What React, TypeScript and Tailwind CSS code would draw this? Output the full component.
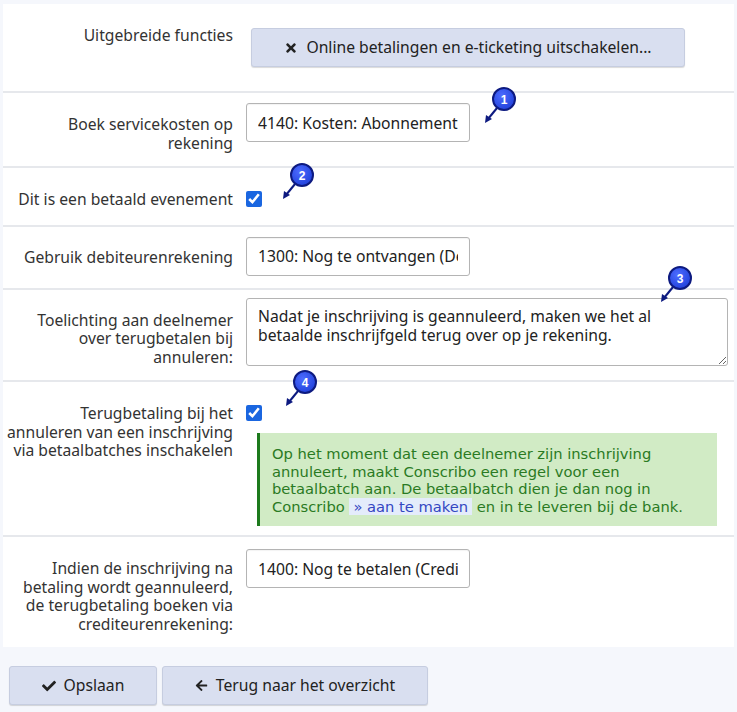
import { FaTimes, FaCheck, FaArrowLeft } from "react-icons/fa";

type BadgeProps = {
  n: number
  x: number
  y: number
}

// numbered annotation bubble with an arrow, drawn over the form
const Badge = ({ n, x, y }: BadgeProps) => {
  return (
    <svg
      width="44"
      height="44"
      viewBox="0 0 44 44"
      className="absolute pointer-events-none"
      style={{ left: x - 28, top: y - 14 }}
    >
      <defs>
        <radialGradient id={`bg${n}`} cx="40%" cy="35%" r="70%">
          <stop offset="0%" stopColor="#4d6cff" />
          <stop offset="100%" stopColor="#1f3fd9" />
        </radialGradient>
      </defs>
      <line x1="21" y1="23" x2="12" y2="34" stroke="#0d1a80" strokeWidth="2" />
      <polygon points="9,38 10,30 16,34" fill="#0d1a80" />
      <circle cx="28" cy="14" r="11" fill={`url(#bg${n})`} stroke="#0d1a80" strokeWidth="2" />
      <text
        x="28"
        y="18.5"
        textAnchor="middle"
        fontSize="12"
        fontWeight="700"
        fill="#fff"
        fontFamily="'Liberation Sans', Arial, sans-serif"
      >
        {n}
      </text>
    </svg>
  );
};

const label = "w-[243px] shrink-0 pr-[13px] text-right text-[15.7px] leading-[18.5px] text-[#333]";
const input =
  "w-[224px] h-[39px] rounded-[3px] border border-[#b4b4b4] bg-white px-[11px] text-[15.7px] text-[#222] outline-none shadow-[inset_0_1px_1px_rgba(0,0,0,0.05)]";
const row = "flex items-start border-b-2 border-[#e6e8ec]";
const btn =
  "flex h-[39px] items-center justify-center gap-[8px] rounded-[3px] border border-[#c6cde0] bg-[#d9dff0] text-[15.7px] text-[#222] shadow-[0_1px_1px_rgba(0,0,0,0.15)]";

const App = () => {
  return (
    <div className="relative min-h-[712px] bg-[#f5f7fc] px-[3px] pt-1 font-['Noto_Sans',sans-serif]">
      <div className="bg-white">
        {/* Uitgebreide functies */}
        <div className={`${row} pt-[22px] pb-[24px]`}>
          <div className={label}>Uitgebreide functies</div>
          <button className={`${btn} mt-[2px] ml-[5px] h-[38px] w-[434px] gap-[6px]`}>
            <FaTimes className="h-[14px] w-[14px]" />
            Online betalingen en e-ticketing uitschakelen...
          </button>
        </div>

        {/* servicekosten */}
        <div className={`${row} pt-[10px] pb-[14px]`}>
          <div className={`${label} mt-[12px]`}>
            Boek servicekosten op
            <br />
            rekening
          </div>
          <input className={input} readOnly value="4140: Kosten: Abonnementen" />
        </div>

        {/* betaald evenement */}
        <div className={`${row} pt-[22px] pb-[16px]`}>
          <div className={label}>Dit is een betaald evenement</div>
          <input type="checkbox" defaultChecked className="mt-[1px] h-4 w-4 accent-[#1a66e0]" />
        </div>

        {/* debiteurenrekening */}
        <div className={`${row} pt-[10px] pb-[12px]`}>
          <div className={`${label} mt-[11px]`}>Gebruik debiteurenrekening</div>
          <input className={input} readOnly value="1300: Nog te ontvangen (Debiteuren)" />
        </div>

        {/* toelichting */}
        <div className={`${row} pt-[8px] pb-[14px]`}>
          <div className={`${label} mt-[13px]`}>
            Toelichting aan deelnemer
            <br />
            over terugbetalen bij
            <br />
            annuleren:
          </div>
          <textarea
            readOnly
            className="h-[68px] w-[482px] rounded-[3px] border border-[#b4b4b4] px-[11px] py-[8px] text-[15.7px] leading-[19px] text-[#222] outline-none"
            value={"Nadat je inschrijving is geannuleerd, maken we het al\nbetaalde inschrijfgeld terug over op je rekening."}
          />
        </div>

        {/* terugbetaling via betaalbatches */}
        <div className={`${row} pt-[22px] pb-[9px]`}>
          <div className={label}>
            Terugbetaling bij het
            <br />
            annuleren van een inschrijving
            <br />
            via betaalbatches inschakelen
          </div>
          <div className="flex flex-col">
            <input type="checkbox" defaultChecked className="mt-[1px] h-4 w-4 accent-[#1a66e0]" />
            <div className="mt-[12px] ml-[11px] w-[460px] border-l-[3px] border-[#1d7a1d] bg-[#d1ebc5] pl-[12px] pt-[12px] pb-[11px] font-['DejaVu_Sans',sans-serif] text-[14.7px] leading-[17.5px] text-[#2a7a23]">
              Op het moment dat een deelnemer zijn inschrijving
              <br />
              annuleert, maakt Conscribo een regel voor een
              <br />
              betaalbatch aan. De betaalbatch dien je dan nog in
              <br />
              Conscribo{" "}
              <a className="bg-[#e4ecfb] px-[4px] text-[#3346c2]">» aan te maken</a>{" "}
              en in te leveren bij de bank.
            </div>
          </div>
        </div>

        {/* crediteurenrekening */}
        <div className="flex items-start pt-[12px] pb-[14px]">
          <div className={`${label} mt-[10px]`}>
            Indien de inschrijving na
            <br />
            betaling wordt geannuleerd,
            <br />
            de terugbetaling boeken via
            <br />
            crediteurenrekening:
          </div>
          <input className={input} readOnly value="1400: Nog te betalen (Crediteuren)" />
        </div>
      </div>

      {/* actions */}
      <div className="mt-[19px] flex gap-[5px] pl-[6px]">
        <button className={`${btn} w-[148px]`}>
          <FaCheck className="h-[14px] w-[14px]" />
          Opslaan
        </button>
        <button className={`${btn} w-[266px]`}>
          <FaArrowLeft className="h-[13px] w-[13px]" />
          Terug naar het overzicht
        </button>
      </div>

      <Badge n={1} x={504} y={99} />
      <Badge n={2} x={302} y={175} />
      <Badge n={3} x={680} y={278} />
      <Badge n={4} x={305} y={382} />
    </div>
  );
};

export default App;
